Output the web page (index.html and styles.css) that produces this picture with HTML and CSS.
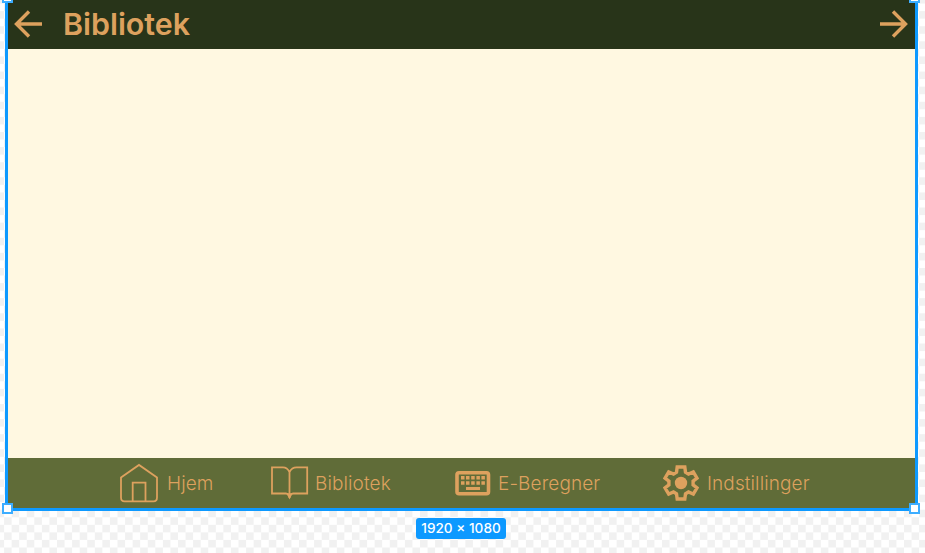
FILE: index.html
```html
<!DOCTYPE html>
<html lang="da">
<head>
<meta charset="utf-8">
<title>Bibliotek</title>
<link rel="stylesheet" href="styles.css">
</head>
<body>
<div class="canvas">
  <div class="frame">
    <header class="topbar">
      <svg class="arrow" width="28" height="28" viewBox="0 0 28 28"><path d="M28 14H2.500M15 1.500L2.500 14L15 26.500"/></svg>
      <h1>Bibliotek</h1>
      <svg class="arrow" width="28" height="28" viewBox="0 0 28 28"><path d="M0 14H25.500M13 1.500L25.500 14L13 26.500"/></svg>
    </header>
    <main></main>
    <nav class="tabs">
      <a class="tab home">
        <svg width="40" height="40" viewBox="0 0 40 40"><path d="M2 14.500L20 1.900L38 14.500V34.500Q38 38.400 34.500 38.400H5.500Q2 38.400 2 34.500ZM13.700 38V19.700H26.500V38"/></svg>
        <span>Hjem</span>
      </a>
      <a class="tab library">
        <svg width="38" height="36" viewBox="0 0 38 36"><path d="M18.500 7C17 4 15 2.300 12 2.300H1V28.500H15Q17 28.500 18.500 31Q20 28.500 22 28.500H36.200V2.300H25.500C22.500 2.300 20 4 18.500 7V33"/><path class="fill" d="M15.500 28.500H21.500L18.500 34.500Z"/></svg>
        <span>Bibliotek</span>
      </a>
      <a class="tab calc">
        <svg width="36" height="26" viewBox="0 0 36 26"><rect class="body" x="2" y="2.700" width="31.500" height="21" rx="2"/><path class="fill" d="M6 6h3.500v3.500h-3.500zM11 6h3.500v3.500h-3.500zM16.200 6h3.500v3.500h-3.500zM21.400 6h3.500v3.500h-3.500zM26.400 6h3.500v3.500h-3.500zM6 11.200h3.500v3.500h-3.500zM11 11.200h3.500v3.500h-3.500zM16.200 11.200h3.500v3.500h-3.500zM21.400 11.200h3.500v3.500h-3.500zM26.400 11.200h3.500v3.500h-3.500zM11 17h14v3h-14z"/></svg>
        <span>E-Beregner</span>
      </a>
      <a class="tab settings">
        <svg width="36" height="36" viewBox="0 0 36 36"><path class="gear" d="M14.200 2H21.800L22.500 7.200L25.500 9L30.300 7L34 13.200L30.100 16.200V19.800L34 22.800L30.300 29L25.500 27L22.500 28.800L21.800 34H14.200L13.500 28.800L10.500 27L5.700 29L2 22.800L5.900 19.800V16.200L2 13.200L5.700 7L10.500 9L13.500 7.200Z"/><circle class="fill" cx="18" cy="18" r="6.200"/></svg>
        <span>Indstillinger</span>
      </a>
    </nav>
    <i class="handle tl"></i><i class="handle tr"></i><i class="handle bl"></i><i class="handle br"></i>
  </div>
  <div class="size">1920 × 1080</div>
</div>
</body>
</html>
```
FILE: styles.css
```css
* { box-sizing: border-box; }
body { margin: 0; font-family: Inter, "Liberation Sans", sans-serif; }
.canvas {
  height: 553px;
  overflow: hidden;
  padding-left: 5px;
  background: repeating-conic-gradient(#fff 0 25%, #f1f1f1 0 50%) -3.500px -4px / 15.130px 15.120px;
}
.frame {
  position: relative;
  width: 913px;
  height: 511px;
  border: solid #0d99ff;
  border-width: 0 3px 3px;
  display: flex;
  flex-direction: column;
}
.topbar {
  height: 49px;
  padding: 0 7.500px 1px 6px;
  display: flex;
  align-items: center;
  background: #283419;
  color: #dda15e;
}
.topbar h1 {
  flex: 1;
  margin: 0 0 0 21px;
  font-size: 30.400px;
  line-height: 36px;
  font-weight: 600;
}
svg { flex: none; fill: none; stroke: #dda15e; stroke-width: 1.800; }
.arrow { stroke-width: 3.400; }
.fill { fill: #dda15e; stroke: none; }
.body { stroke-width: 3.600; }
.gear { stroke-width: 3.400; }
main { flex: 1; background: #fff8e1; }
.tabs {
  height: 50px;
  display: flex;
  padding-left: 111px;
  background: #606c38;
  color: #dda15e;
}
.tab { display: flex; align-items: center; font-size: 19px; font-weight: 300; letter-spacing: 0.100px; white-space: nowrap; }
.home { gap: 8px; width: 151.500px; }
.library { gap: 6.500px; width: 184.500px; }
.calc { gap: 7px; width: 208px; }
.settings { gap: 8px; }
.handle {
  position: absolute;
  width: 11px;
  height: 11px;
  background: #fff;
  border: 2px solid #3dadff;
}
.tl { left: -6px; top: -8px; }
.tr { right: -5px; top: -8px; }
.bl { left: -6px; bottom: -6px; }
.br { right: -5px; bottom: -6px; }
.size {
  width: 90px;
  height: 21px;
  margin: 7px 0 0 411px;
  border-radius: 3px;
  background: #0d99ff;
  color: #fff;
  font-size: 13.600px;
  line-height: 21px;
  font-weight: 500;
  text-align: center;
  white-space: nowrap;
}
```
